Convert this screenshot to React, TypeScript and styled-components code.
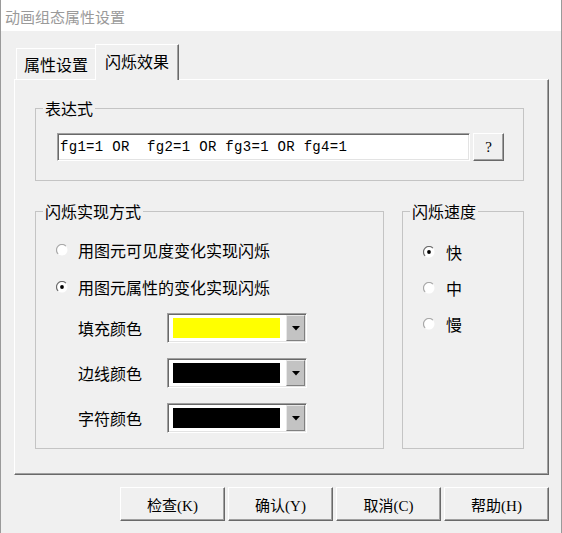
import React from 'react'
import styled, { createGlobalStyle } from 'styled-components'

const GlobalStyle = createGlobalStyle`
  html, body {
    margin: 0;
    padding: 0;
    background: #f0f0f0;
  }
  body {
    font-family: "Noto Sans CJK SC", "Liberation Sans", sans-serif;
    color: #000;
  }
`

const Window = styled.div`
  box-sizing: border-box;
  width: 562px;
  height: 533px;
  background: #f0f0f0;
  border-left: 1px solid #9a9a9a;
  border-right: 1px solid #9a9a9a;
  overflow: hidden;
`

const TitleBar = styled.div`
  box-sizing: border-box;
  height: 31px;
  padding: 2px 0 0 4px;
  display: flex;
  align-items: center;
  background: #fff;
  color: #9a9a9a;
  font-size: 15px;
`

const Body = styled.div`
  padding: 13px 12px 0 13px;
`

const TabStrip = styled.div`
  position: relative;
  z-index: 1;
  display: flex;
  align-items: flex-end;
  height: 35px;
  padding-left: 2px;
`

const Tab = styled.div<{ $active?: boolean }>`
  box-sizing: border-box;
  display: flex;
  align-items: center;
  justify-content: center;
  width: ${(p) => (p.$active ? 84 : 79)}px;
  height: ${(p) => (p.$active ? 36 : 31)}px;
  margin-bottom: ${(p) => (p.$active ? -1 : 0)}px;
  padding-bottom: ${(p) => (p.$active ? 4 : 0)}px;
  background: #f0f0f0;
  border-top: 1px solid #fff;
  border-left: 1px solid #fff;
  border-right: ${(p) => (p.$active ? '1px solid #696969' : 'none')};
  box-shadow: ${(p) => (p.$active ? 'inset -1px 0 0 #a0a0a0' : 'none')};
  font-size: 16px;
  line-height: 20px;
`

const Panel = styled.div`
  box-sizing: border-box;
  height: 396px;
  display: flex;
  flex-direction: column;
  gap: 20px;
  padding: 18px 0 0 20px;
  border-top: 1px solid #fff;
  border-left: 1px solid #fff;
  border-right: 1px solid #696969;
  border-bottom: 1px solid #696969;
  box-shadow: inset -1px -1px 0 #a0a0a0;
`

const GroupBox = styled.fieldset<{ $width: number; $height?: number }>`
  box-sizing: border-box;
  margin: 0;
  padding: 0;
  min-width: 0;
  width: ${(p) => p.$width}px;
  height: ${(p) => (p.$height ? `${p.$height}px` : 'auto')};
  border: 1px solid #c4c4c4;
`

const Legend = styled.legend`
  margin-left: 7px;
  padding: 0 2px;
  font-size: 16px;
  line-height: 20px;
`

const ExprRow = styled.div`
  display: flex;
  gap: 3px;
  padding: 15px 0 19px 21px;
`

const sunken = `
  border: 1px solid;
  border-color: #a0a0a0 #fff #fff #a0a0a0;
  box-shadow: inset 1px 1px 0 #696969, inset -1px -1px 0 #e3e3e3;
  background: #fff;
`

const ExprInput = styled.input`
  box-sizing: border-box;
  width: 413px;
  height: 28px;
  ${sunken}
  padding: 0 0 0 2px;
  outline: none;
  color: #000;
  font-family: "Liberation Mono", monospace;
  font-size: 14px;
  letter-spacing: 0.3px;
`

const RaisedButton = styled.button<{ $width: number; $height: number }>`
  box-sizing: border-box;
  width: ${(p) => p.$width}px;
  height: ${(p) => p.$height}px;
  padding: 0;
  background: #f0f0f0;
  border: 1px solid;
  border-color: #fff #696969 #696969 #fff;
  box-shadow: inset -1px -1px 0 #a0a0a0;
  color: #000;
  font-family: "Liberation Serif", "Noto Sans CJK SC", serif;
  font-size: 15px;
`

const BottomRow = styled.div`
  display: flex;
  gap: 18px;
`

const GroupBody = styled.div<{ $top: number; $gap: number }>`
  display: flex;
  flex-direction: column;
  gap: ${(p) => p.$gap}px;
  padding: ${(p) => p.$top}px 0 0 20px;
`

const RadioRow = styled.div<{ $gap: number }>`
  display: flex;
  align-items: center;
  gap: ${(p) => p.$gap}px;
  height: 24px;
  font-size: 16px;
`

const ColorList = styled.div`
  display: flex;
  flex-direction: column;
  gap: 15px;
  margin-top: 1px;
  padding-left: 22px;
`

const ColorRow = styled.div`
  display: flex;
  align-items: center;
`

const ColorLabel = styled.span`
  width: 89px;
  font-size: 16px;
`

const Combo = styled.div`
  box-sizing: border-box;
  display: flex;
  width: 140px;
  height: 30px;
  padding: 1px 1px 1px 5px;
  ${sunken}
`

const Swatch = styled.div<{ $color: string }>`
  flex: 1;
  margin: 3px 6px 3px 0;
  background: ${(p) => p.$color};
`

const DropButton = styled.div`
  box-sizing: border-box;
  display: flex;
  align-items: center;
  justify-content: center;
  width: 19px;
  background: #c3c3c3;
  border: 1px solid;
  border-color: #e8e8e8 #808080 #808080 #e8e8e8;
`

const ButtonRow = styled.div`
  display: flex;
  justify-content: flex-end;
  gap: 3px;
  margin-top: 12px;
`

const Radio = ({ checked }: { checked?: boolean }) => (
  <svg width="12" height="12" viewBox="0 0 12 12">
    <circle cx="6" cy="6" r="5.5" fill="#fff" />
    <path d="M2.1 9.9 A5.5 5.5 0 0 1 9.9 2.1" fill="none" stroke={checked ? '#6a6a6a' : '#a8a8a8'} strokeWidth="1.2" />
    {checked && <circle cx="6" cy="6" r="1.9" fill="#000" />}
  </svg>
)

const ColorPicker = ({ color }: { color: string }) => (
  <Combo>
    <Swatch $color={color} />
    <DropButton>
      <svg width="8" height="5" viewBox="0 0 8 5">
        <polygon points="0,0 8,0 4,4.5" fill="#000" />
      </svg>
    </DropButton>
  </Combo>
)

const colors = [
  { label: '填充颜色', color: '#ffff00' },
  { label: '边线颜色', color: '#000000' },
  { label: '字符颜色', color: '#000000' },
]

const speeds = [
  { label: '快', checked: true },
  { label: '中', checked: false },
  { label: '慢', checked: false },
]

export default function App() {
  return (
    <>
      <GlobalStyle />
      <Window>
        <TitleBar>动画组态属性设置</TitleBar>
        <Body>
          <TabStrip>
            <Tab>属性设置</Tab>
            <Tab $active>闪烁效果</Tab>
          </TabStrip>
          <Panel>
            <GroupBox $width={489}>
              <Legend>表达式</Legend>
              <ExprRow>
                <ExprInput readOnly value="fg1=1 OR  fg2=1 OR fg3=1 OR fg4=1" />
                <RaisedButton $width={31} $height={28}>?</RaisedButton>
              </ExprRow>
            </GroupBox>
            <BottomRow>
              <GroupBox $width={349} $height={248}>
                <Legend>闪烁实现方式</Legend>
                <GroupBody $top={17} $gap={13}>
                  <RadioRow $gap={10}>
                    <Radio />
                    用图元可见度变化实现闪烁
                  </RadioRow>
                  <RadioRow $gap={10}>
                    <Radio checked />
                    用图元属性的变化实现闪烁
                  </RadioRow>
                  <ColorList>
                    {colors.map((c) => (
                      <ColorRow key={c.label}>
                        <ColorLabel>{c.label}</ColorLabel>
                        <ColorPicker color={c.color} />
                      </ColorRow>
                    ))}
                  </ColorList>
                </GroupBody>
              </GroupBox>
              <GroupBox $width={122} $height={248}>
                <Legend>闪烁速度</Legend>
                <GroupBody $top={19} $gap={12}>
                  {speeds.map((s) => (
                    <RadioRow key={s.label} $gap={11}>
                      <Radio checked={s.checked} />
                      {s.label}
                    </RadioRow>
                  ))}
                </GroupBody>
              </GroupBox>
            </BottomRow>
          </Panel>
          <ButtonRow>
            <RaisedButton $width={105} $height={34}>检查(K)</RaisedButton>
            <RaisedButton $width={105} $height={34}>确认(Y)</RaisedButton>
            <RaisedButton $width={105} $height={34}>取消(C)</RaisedButton>
            <RaisedButton $width={105} $height={34}>帮助(H)</RaisedButton>
          </ButtonRow>
        </Body>
      </Window>
    </>
  )
}
